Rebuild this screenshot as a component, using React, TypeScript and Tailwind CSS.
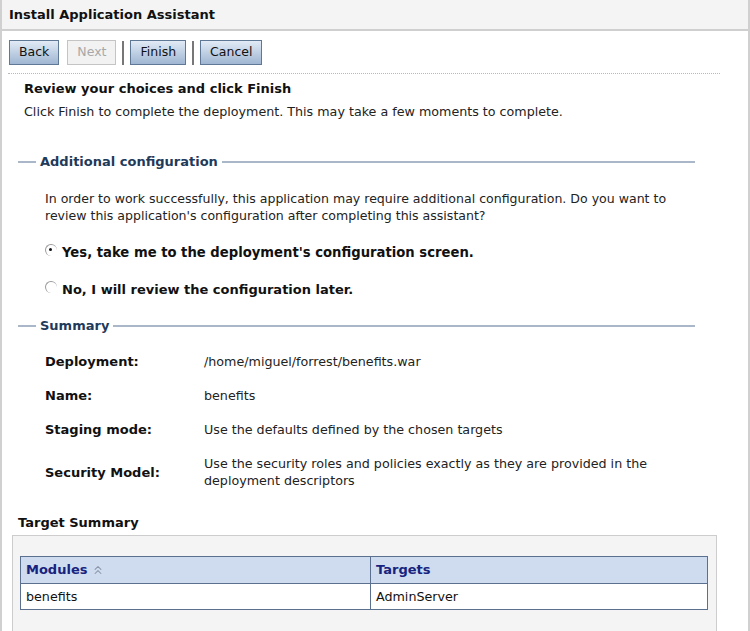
import { ChevronsUp } from 'lucide-react';

const font = { fontFamily: '"DejaVu Sans", sans-serif' };

function Btn({ label, disabled }: { label: string; disabled?: boolean }) {
  return (
    <button
      type="button"
      disabled={disabled}
      className={
        disabled
          ? 'h-[25px] border border-[#c4c4c4] bg-[#f2f2f2] px-[9px] text-[12.5px] text-[#a8a8a8]'
          : 'h-[25px] border border-[#5f7896] bg-gradient-to-b from-[#e2ebf6] to-[#9fb6d2] px-[9px] text-[12.5px] text-[#111]'
      }
    >
      {label}
    </button>
  );
}

function Legend({ title }: { title: string }) {
  return (
    <div className="flex items-center">
      <div className="h-[2px] w-[18px] bg-[#a9b7c8]" />
      <span className="px-[4px] text-[13px] font-bold leading-[17px] text-[#1f3a5a]">{title}</span>
      <div className="h-[2px] flex-1 bg-[#a9b7c8]" />
    </div>
  );
}

function Row({ label, children }: { label: string; children: React.ReactNode }) {
  return (
    <div className="flex items-center">
      <div className="w-[159px] text-[13px] font-bold leading-[17px] text-[#111]">{label}</div>
      <div className="w-[460px] text-[12.7px] leading-[17px] text-[#222]">{children}</div>
    </div>
  );
}

export default function App() {
  return (
    <div style={font} className="h-[631px] w-[750px] overflow-hidden border-r-2 border-l-2 border-[#d0d0d0] bg-white text-[#222]">
      <div className="-mx-[2px] flex h-[31px] items-center border-b-2 border-[#cfcfcf] bg-[#f4f4f4] pl-[9px] text-[13px] font-bold text-[#111]">
        Install Application Assistant
      </div>

      <div className="flex items-center pl-[7px] pt-[9px]">
        <Btn label="Back" />
        <div className="w-[8px]" />
        <Btn label="Next" disabled />
        <div className="mx-[6px] h-[24px] w-[2px] bg-[#777]" />
        <Btn label="Finish" />
        <div className="mx-[6px] h-[24px] w-[2px] bg-[#777]" />
        <Btn label="Cancel" />
      </div>
      <div className="ml-[6px] mt-[8px] w-[712px] border-t border-dotted border-[#b8b8b8]" />

      <div className="pl-[22px] pt-[6px]">
        <div className="text-[13px] font-bold leading-[17px] text-[#111]">Review your choices and click Finish</div>
        <div className="mt-[6px] text-[12.7px] leading-[17px]">
          Click Finish to complete the deployment. This may take a few moments to complete.
        </div>
      </div>

      <div className="ml-[16px] mt-[33px] w-[677px]">
        <Legend title="Additional configuration" />
        <div className="pl-[27px] pt-[20px]">
          <p className="text-[12.55px] leading-[17px]">
            In order to work successfully, this application may require additional configuration. Do you want to
            <br />
            review this application's configuration after completing this assistant?
          </p>
          <label className="mt-[20px] flex items-center gap-[5px] text-[13.2px] font-bold leading-[17px] text-[#111]">
            <span className="relative -mt-[6px] inline-block h-[12px] w-[12px] rounded-full border-l border-t border-[#9a9a9a]">
              <span className="absolute left-[3px] top-[3px] h-[3px] w-[3px] rounded-full bg-[#111]" />
            </span>
            Yes, take me to the deployment's configuration screen.
          </label>
          <label className="mt-[20px] flex items-center gap-[5px] text-[13px] font-bold leading-[17px] text-[#111]">
            <span className="-mt-[6px] inline-block h-[12px] w-[12px] rounded-full border-l border-t border-[#9a9a9a]" />
            No, I will review the configuration later.
          </label>
        </div>

        <div className="mt-[19px]">
          <Legend title="Summary" />
        </div>
        <div className="flex flex-col gap-[17px] pl-[27px] pt-[19px]">
          <Row label="Deployment:">/home/miguel/forrest/benefits.war</Row>
          <Row label="Name:">benefits</Row>
          <Row label="Staging mode:">Use the defaults defined by the chosen targets</Row>
          <Row label="Security Model:">
            Use the security roles and policies exactly as they are provided in the deployment descriptors
          </Row>
        </div>
      </div>

      <div className="ml-[16px] mt-[25px] text-[13px] font-bold leading-[17px] text-[#111]">Target Summary</div>
      <div className="ml-[10px] mt-[4px] h-[120px] w-[705px] border border-[#cdcdcd] bg-[#f4f4f4] px-[7px] pt-[20px]">
        <table className="w-[688px] border-collapse border border-[#5b6f8e] text-[12.7px]">
          <thead>
            <tr className="h-[27px] bg-[#cfdcef]">
              <th className="w-[350px] border border-[#5b6f8e] pl-[5px] text-left text-[13px] font-bold text-[#17237e]">
                <span className="inline-flex items-center gap-[4px]">
                  Modules
                  <ChevronsUp size={14} strokeWidth={1.75} className="text-[#8a93a8]" />
                </span>
              </th>
              <th className="border border-[#5b6f8e] pl-[5px] text-left text-[13px] font-bold text-[#17237e]">Targets</th>
            </tr>
          </thead>
          <tbody>
            <tr className="h-[26px] bg-white">
              <td className="border border-[#5b6f8e] pl-[5px] text-[#111]">benefits</td>
              <td className="border border-[#5b6f8e] pl-[5px] text-[#111]">AdminServer</td>
            </tr>
          </tbody>
        </table>
      </div>
    </div>
  );
}
